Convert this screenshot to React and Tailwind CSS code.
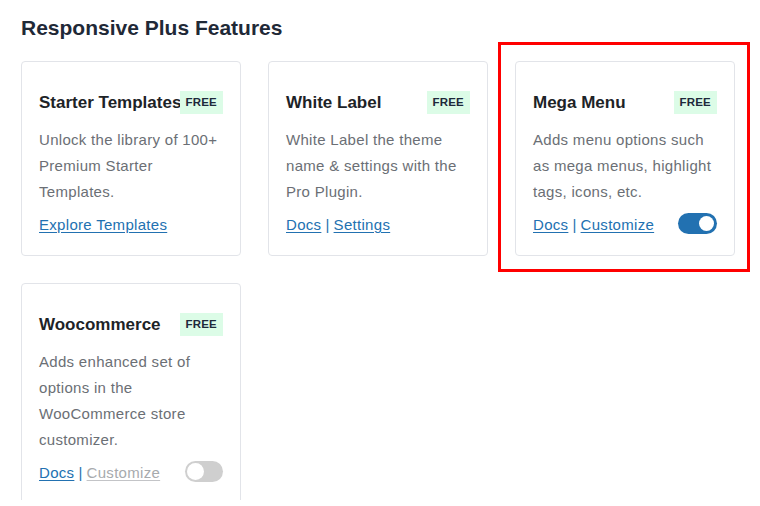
import React from "react";

function Badge() {
  return (
    <span className="relative z-10 flex h-[23px] shrink-0 items-center bg-[#dcfce7] px-[6px] text-[11.5px] font-bold tracking-[0.2px] text-[#1e293b]">
      FREE
    </span>
  );
}

function Toggle({ on }) {
  return on ? (
    <span className="mt-[1px] flex h-[21px] w-[39px] items-center justify-end rounded-full bg-[#2271b1] px-[3px]">
      <span className="h-[15px] w-[15px] rounded-full bg-white" />
    </span>
  ) : (
    <span className="mt-[1px] flex h-[21px] w-[38px] items-center justify-start rounded-full bg-[#cfcfcf] px-[2px]">
      <span className="h-[17px] w-[17px] rounded-full bg-white" />
    </span>
  );
}

function Card({ title, desc, links, toggle }) {
  return (
    <div className="flex flex-col rounded-[4px] border border-[#e2e4e9] bg-white px-[17px] pb-[17px] pt-[29px]">
      <div className="flex h-[23px] items-center justify-between">
        <span className="min-w-0 whitespace-nowrap text-[17px] font-bold text-[#1d2327]">{title}</span>
        <Badge />
      </div>
      <p className="mt-[13px] text-[15px] leading-[26px] tracking-[0.3px] text-[#6b6f75]">{desc}</p>
      <div className="mt-[7px] flex h-[26px] items-start justify-between">
        <div className="flex items-center text-[15px] leading-[26px] tracking-[0.3px]">{links}</div>
        {toggle !== undefined && <Toggle on={toggle} />}
      </div>
    </div>
  );
}

const L = ({ children, muted }) => (
  <a
    href="#"
    className={
      muted
        ? "text-[#a7aaad] underline decoration-[#c3c4c7] underline-offset-2"
        : "text-[#2271b1] underline underline-offset-2"
    }
  >
    {children}
  </a>
);
const Sep = () => <span className="mx-[4px] text-[#2271b1]">|</span>;

export default function App() {
  return (
    <div
      className="h-[500px] overflow-hidden bg-white px-[21px] pt-[14px]"
      style={{ fontFamily: '"Liberation Sans", Arial, sans-serif' }}
    >
      <h1 className="text-[21px] font-bold leading-[28px] text-[#1f2937]">Responsive Plus Features</h1>
      <div className="mt-[19px] grid grid-cols-[220px_220px_220px] gap-x-[27px] gap-y-[27px]">
        <Card
          title="Starter Templates"
          desc="Unlock the library of 100+ Premium Starter Templates."
          links={<L>Explore Templates</L>}
        />
        <Card
          title="White Label"
          desc="White Label the theme name & settings with the Pro Plugin."
          links={
            <>
              <L>Docs</L>
              <Sep />
              <L>Settings</L>
            </>
          }
        />
        <div className="relative">
          <div className="pointer-events-none absolute -bottom-[16px] -left-[17px] -right-[15px] -top-[19px] border-[3px] border-[#ff0000]" />
          <Card
            title="Mega Menu"
            desc="Adds menu options such as mega menus, highlight tags, icons, etc."
            links={
              <>
                <L>Docs</L>
                <Sep />
                <L>Customize</L>
              </>
            }
            toggle={true}
          />
        </div>
        <Card
          title="Woocommerce"
          desc="Adds enhanced set of options in the WooCommerce store customizer."
          links={
            <>
              <L>Docs</L>
              <Sep />
              <L muted>Customize</L>
            </>
          }
          toggle={false}
        />
      </div>
    </div>
  );
}
